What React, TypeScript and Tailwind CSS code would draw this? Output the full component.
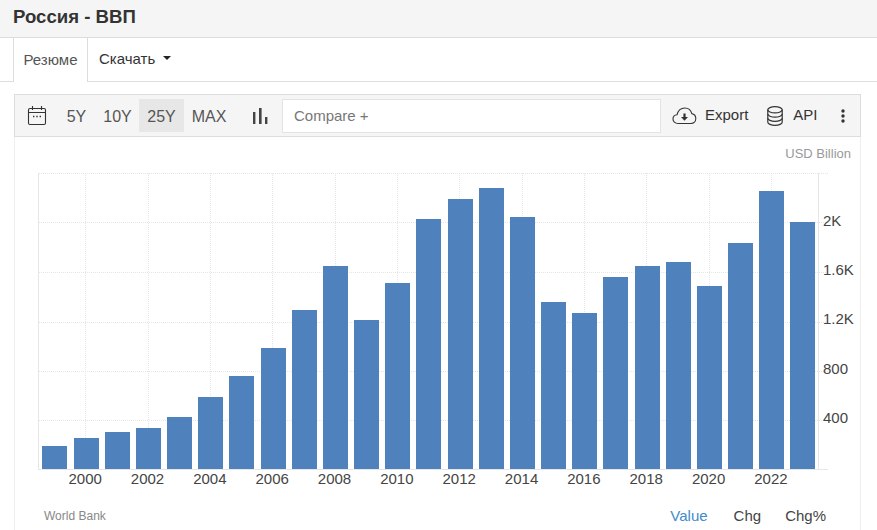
import React from "react";

const tops = [446,438,432,428,417,397,376,348,310,266,320,283,219,199,188,217,302,313,277,266,262,286,243,191,222];
const years = [2000,2002,2004,2006,2008,2010,2012,2014,2016,2018,2020,2022];
const yTicks: [string, number][] = [["2K",226],["1.6K",275],["1.2K",324],["800",374],["400",423]];
const X0 = 42.4, STEP = 31.17;
const OX = 15, OY = 137;

function Chart() {
  const gridV = years.map((_, i) => 54 + STEP + i * 2 * STEP);
  return (
    <svg width={845} height={355} viewBox={`${OX} ${OY} 845 355`} className="block" style={{ fontFamily: '"Liberation Sans", Arial, sans-serif' }}>
      <text x={851} y={158} textAnchor="end" fontSize={13} fill="#999">USD Billion</text>
      {[173,222,272,322,371,420].map((y) => (
        <line key={y} x1={39} x2={828} y1={y + 0.5} y2={y + 0.5} stroke="#e6e6e6" strokeDasharray="1 1" />
      ))}
      {gridV.map((x) => (
        <line key={x} x1={Math.round(x) + 0.5} x2={Math.round(x) + 0.5} y1={173} y2={469} stroke="#e6e6e6" strokeDasharray="1 1" />
      ))}
      <line x1={39} x2={828} y1={469.5} y2={469.5} stroke="#e6e6e6" />
      <line x1={38.5} x2={38.5} y1={173} y2={470} stroke="#e6e6e6" />
      <line x1={818.5} x2={818.5} y1={173} y2={470} stroke="#e6e6e6" />
      {tops.map((t, i) => (
        <rect key={i} x={Math.round(X0 + i * STEP)} y={t} width={25} height={469 - t} fill="#4f81bd" />
      ))}
      {years.map((yr, i) => (
        <text key={yr} x={gridV[i]} y={484} textAnchor="middle" fontSize={15} fill="#444">{yr}</text>
      ))}
      {yTicks.map(([l, y]) => (
        <text key={l} x={823} y={y} fontSize={15} fill="#444">{l}</text>
      ))}
    </svg>
  );
}

function IconCalendar() {
  return (
    <svg width="20" height="20" viewBox="0 0 20 20" fill="none" stroke="#333" strokeWidth="1.1">
      <rect x="1.5" y="2.5" width="17" height="16" rx="1.5" />
      <path d="M1.5 6.5h17M5.5 0v4M14.5 0v4" />
      <path d="M6 10.5h1.4M9.3 10.5h1.4M12.6 10.5h1.4" strokeWidth="1.3" />
    </svg>
  );
}

function IconBars() {
  return (
    <svg width="16" height="16" viewBox="0 0 16 16" fill="#444">
      <rect x="0" y="4" width="2.4" height="12" />
      <rect x="6" y="0" width="2.6" height="16" />
      <rect x="12" y="9" width="2.4" height="7" />
    </svg>
  );
}

function IconCloud() {
  return (
    <svg width="25" height="18" viewBox="0 0 25 18" fill="none" stroke="#333" strokeWidth="1.1">
      <path d="M6 16.5C3 16.5 1 14.5 1 12c0-2.4 1.8-4 4-4.2C6 4 9 1 12.8 1c3.6 0 6.2 2.4 7 5.6 2.3.4 4 2.6 4 5 0 2.7-2 4.9-4.8 4.9H6z" />
      <path d="M12.5 6.5v5" strokeWidth="2.2" />
      <path d="M9 10h7l-3.5 3.8z" fill="#333" stroke="none" />
    </svg>
  );
}

function IconDb() {
  return (
    <svg width="16" height="20" viewBox="0 0 16 20" fill="none" stroke="#333" strokeWidth="1.2">
      <ellipse cx="8" cy="3.8" rx="7.2" ry="3.1" />
      <path d="M.8 3.8v12.4c0 1.7 3.2 3.1 7.2 3.1s7.2-1.4 7.2-3.1V3.8" />
      <path d="M.8 8c0 1.7 3.2 3.1 7.2 3.1S15.2 9.7 15.2 8M.8 12.2c0 1.7 3.2 3.1 7.2 3.1s7.2-1.4 7.2-3.1" />
    </svg>
  );
}

function IconDots() {
  return (
    <svg width="4" height="14" viewBox="0 0 4 14" fill="#333">
      <circle cx="2" cy="2" r="1.7" />
      <circle cx="2" cy="7" r="1.7" />
      <circle cx="2" cy="12" r="1.7" />
    </svg>
  );
}

export default function App() {
  return (
    <div className="w-[877px] h-[530px] overflow-hidden bg-white font-['Liberation_Sans',Arial,sans-serif]">
      <div className="h-[38px] bg-[#f5f5f5] border-b border-[#dddddd] pl-[13px] flex items-center">
        <h1 className="text-[18.6px] font-bold text-[#333] leading-none pb-[3px]">Россия - ВВП</h1>
      </div>

      <div className="h-[44px] border-b border-[#dddddd] pl-[13px] flex">
        <div className="w-[75px] h-[44px] bg-white border-l border-r border-[#dddddd] flex items-center justify-center text-[15px] text-[#555]">Резюме</div>
        <div className="flex items-center pl-[11px] text-[15px] text-[#333]">
          Скачать
          <span className="ml-[8px] mb-[3px] w-0 h-0 border-x-[4px] border-x-transparent border-t-[4px] border-t-[#222]" />
        </div>
      </div>

      <div className="mt-[12px] ml-[14px] w-[847px] border-x border-[#f0f0f0]">
        <div className="h-[43px] bg-[#f5f5f5] border border-[#dddddd] -mx-px flex items-center pl-[12px]">
          <IconCalendar />
          <div className="ml-[10px] flex items-center text-[#555] text-[16px]">
            <span className="w-[39px] h-[33px] pt-[2px] flex items-center justify-center">5Y</span>
            <span className="w-[43px] h-[33px] pt-[2px] flex items-center justify-center">10Y</span>
            <span className="w-[45px] h-[33px] pt-[2px] flex items-center justify-center bg-[#e7e7e7]">25Y</span>
            <span className="w-[50px] h-[33px] pt-[2px] flex items-center justify-center">MAX</span>
          </div>
          <div className="ml-[19px]"><IconBars /></div>
          <div className="ml-[13px] w-[379px] h-[34px] bg-white border border-[#e3e3e3] flex items-center pl-[11px] pt-[2px] text-[15px] text-[#777]">Compare +</div>
          <div className="ml-[11px]"><IconCloud /></div>
          <span className="ml-[8px] text-[15px] text-[#333]">Export</span>
          <div className="ml-[19px]"><IconDb /></div>
          <span className="ml-[10px] text-[15px] text-[#333]">API</span>
          <div className="ml-[23px]"><IconDots /></div>
        </div>

        <Chart />

        <div className="h-[38px] flex items-start justify-between pt-[16px] pl-[29px] pr-[34px]">
          <span className="text-[12px] text-[#888] leading-[16px]">World Bank</span>
          <div className="flex text-[15px] leading-[18px] -mt-px">
            <span className="text-[#428bca]">Value</span>
            <span className="ml-[26px] text-[#444]">Chg</span>
            <span className="ml-[24px] text-[#444]">Chg%</span>
          </div>
        </div>
      </div>
    </div>
  );
}
